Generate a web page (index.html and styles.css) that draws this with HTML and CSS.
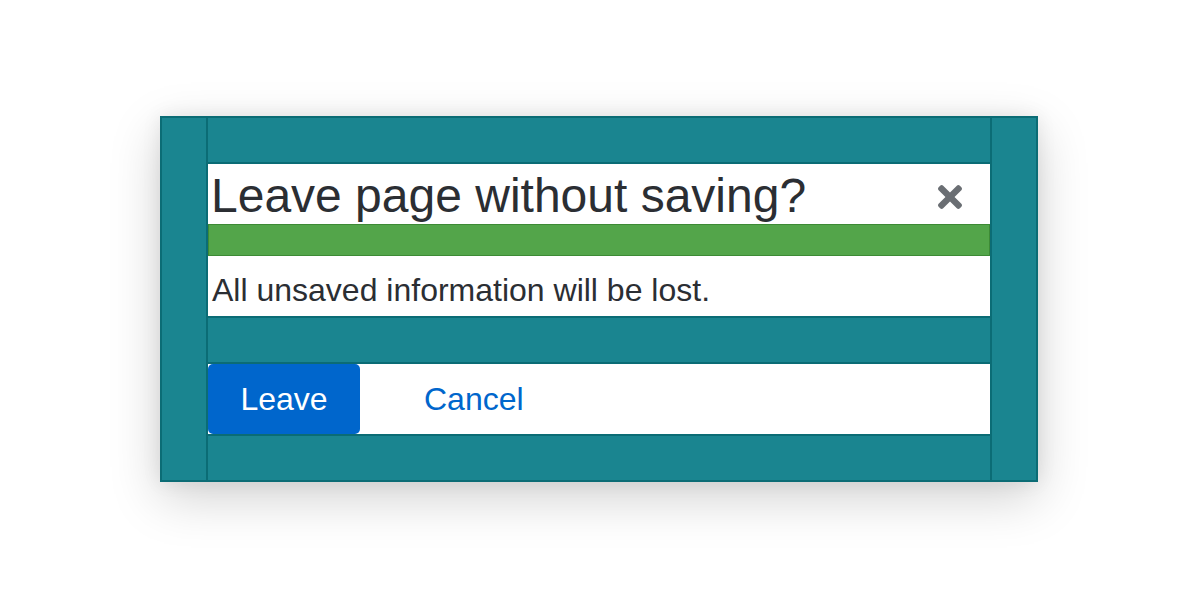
FILE: index.html
```html
<!DOCTYPE html>
<html lang="en">
<head>
<meta charset="utf-8">
<title>Leave page without saving?</title>
<link rel="stylesheet" href="styles.css">
</head>
<body>
<div class="modal" role="dialog" aria-labelledby="modal-title">
  <div class="col">
    <div class="band band-top"></div>
    <header class="modal-header">
      <h1 class="modal-title" id="modal-title">Leave page without saving?</h1>
      <button class="close" aria-label="Close">
        <svg viewBox="0 80 352 352" width="24" height="24" aria-hidden="true"><path fill="currentColor" d="M242.72 256l100.07-100.07c12.28-12.28 12.28-32.19 0-44.48l-22.24-22.24c-12.28-12.28-32.19-12.28-44.48 0L176 189.28 75.93 89.21c-12.28-12.28-32.19-12.28-44.48 0L9.21 111.45c-12.28 12.28-12.28 32.19 0 44.48L109.28 256 9.21 356.07c-12.28 12.28-12.28 32.19 0 44.48l22.24 22.24c12.28 12.28 32.2 12.28 44.48 0L176 322.72l100.07 100.07c12.28 12.28 32.2 12.28 44.48 0l22.24-22.24c12.28-12.28 12.28-32.19 0-44.48L242.72 256z"/></svg>
      </button>
    </header>
    <div class="divider"></div>
    <div class="modal-body">All unsaved information will be lost.</div>
    <div class="band band-mid"></div>
    <footer class="modal-footer">
      <button class="btn btn-primary">Leave</button>
      <button class="btn btn-link">Cancel</button>
    </footer>
    <div class="band band-bottom"></div>
  </div>
</div>
</body>
</html>
```

FILE: styles.css
```css
* { box-sizing: border-box; }

html, body {
  margin: 0;
  padding: 0;
  background: #ffffff;
}

body {
  height: 100vh;
  display: flex;
  align-items: center;
  justify-content: center;
  font-family: "Liberation Sans", Arial, sans-serif;
  color: #2b2e33;
}

.modal {
  width: 878px;
  margin: 0 0 2px -2px;
  background: #1a8590;
  border: 2px solid #0b6c75;
  padding: 0 44px;
  box-shadow: 0 16px 48px rgba(3, 3, 3, 0.18), 0 0 18px rgba(3, 3, 3, 0.08);
}

.col {
  display: flex;
  flex-direction: column;
  border-left: 2px solid #0b6c75;
  border-right: 2px solid #0b6c75;
}

.band {
  height: 46px;
  background: #1a8590;
}
.band-top { border-bottom: 2px solid #0b6c75; }
.band-mid { height: 48px; border-top: 2px solid #0b6c75; border-bottom: 2px solid #0b6c75; }
.band-bottom { border-top: 2px solid #0b6c75; }

.modal-header {
  height: 60px;
  background: #ffffff;
  display: flex;
  align-items: center;
  justify-content: space-between;
}

.modal-title {
  margin: 4px 0 0 0;
  padding-left: 3px;
  font-size: 48px;
  line-height: 56px;
  font-weight: 400;
  color: #2b2e33;
}

.close {
  margin: 5px 28px 0 0;
  padding: 0;
  border: 0;
  background: transparent;
  color: #6a6e73;
  display: flex;
}

.divider {
  height: 32px;
  background: #53a54a;
  border: 1px solid #3d8a35;
}

.modal-body {
  height: 60px;
  background: #ffffff;
  padding: 16px 0 0 4px;
  font-size: 32px;
  line-height: 36px;
  color: #2b2e33;
}

.modal-footer {
  height: 70px;
  background: #ffffff;
  display: flex;
  align-items: stretch;
  gap: 32px;
}

.btn {
  font-family: "Liberation Sans", Arial, sans-serif;
  font-size: 32px;
  line-height: 36px;
  padding: 0 32px;
  border: 0;
  border-radius: 5px;
  background: transparent;
  cursor: pointer;
}

.btn-primary {
  width: 152px;
  background: #0066cc;
  color: #ffffff;
}

.btn-link {
  color: #0066cc;
}
```
